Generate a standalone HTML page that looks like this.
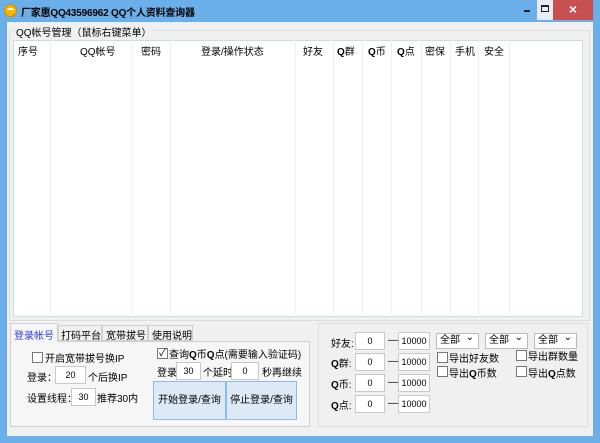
<!DOCTYPE html>
<html><head><meta charset="utf-8"><style>
*{box-sizing:border-box;margin:0;padding:0}
body{width:600px;height:443px;overflow:hidden;background:#6aaeea;font-family:"Liberation Sans","Noto Sans CJK SC",sans-serif;font-size:10px;color:#000;position:relative}
.a{position:absolute;white-space:nowrap}
.inp{position:absolute;background:#fff;border:1px solid #c8c8c8;text-align:center;font-size:9px;line-height:16px}
.cb{position:absolute;width:11px;height:11px;border:1px solid #777;background:#fff}
.sel{position:absolute;background:#fff;border:1px solid #bbb;height:16px;font-size:10px;line-height:14px;padding-left:3px}
.sel:after{content:"⌄";position:absolute;right:4px;top:-3px;font-size:10px}
.hd{position:absolute;top:43px;font-size:10px}
.vl{position:absolute;top:40px;width:1px;height:277px;background:#f0f0f0}
</style></head><body>
<div class="a" style="left:0;top:0;width:600px;height:22px;background:#6aaeea"></div>
<div class="a" style="left:4px;top:4px;width:13px;height:13px;border-radius:50%;background:#f4b400;border:1px solid #d08a00"></div>
<div class="a" style="left:7px;top:8px;width:7px;height:4px;border-top:2px solid #fff;border-radius:50%"></div>
<div class="a" style="left:21px;top:4px;font-weight:bold;font-size:10px;letter-spacing:-0.2px;color:#000">厂家惠QQ43596962 QQ个人资料查询器</div>
<div class="a" style="left:524px;top:10px;width:6px;height:2px;background:#222"></div>
<div class="a" style="left:537px;top:0;width:16px;height:20px;background:#e8edf3"></div>
<div class="a" style="left:541px;top:5px;width:8px;height:7px;border:1px solid #222;border-top-width:2px"></div>
<div class="a" style="left:553px;top:0;width:40px;height:20px;background:#c75050;color:#fff;text-align:center;font-size:14px;line-height:19px;font-weight:bold">×</div>
<div class="a" style="left:7px;top:22px;width:586px;height:414px;background:#f0f0f0"></div>
<div class="a" style="left:9px;top:30px;width:581px;height:291px;border:1px solid #dcdcdc"></div>
<div class="a" style="left:14px;top:24px;background:#f0f0f0;padding:0 2px;font-size:10px">QQ帐号管理（鼠标右键菜单）</div>
<div class="a" style="left:13px;top:40px;width:570px;height:277px;background:#fff;border:1px solid #cdd"></div>
<div class="vl" style="left:50px"></div><div class="vl" style="left:132px"></div><div class="vl" style="left:170px"></div><div class="vl" style="left:295px"></div><div class="vl" style="left:333px"></div><div class="vl" style="left:362px"></div><div class="vl" style="left:391px"></div><div class="vl" style="left:421px"></div><div class="vl" style="left:450px"></div><div class="vl" style="left:478px"></div><div class="vl" style="left:509px"></div>
<div class="hd" style="left:18px">序号</div><div class="hd" style="left:80px">QQ帐号</div><div class="hd" style="left:141px">密码</div><div class="hd" style="left:201px">登录/操作状态</div><div class="hd" style="left:303px">好友</div><div class="hd" style="left:337px"><b>Q</b>群</div><div class="hd" style="left:368px"><b>Q</b>币</div><div class="hd" style="left:397px"><b>Q</b>点</div><div class="hd" style="left:425px">密保</div><div class="hd" style="left:455px">手机</div><div class="hd" style="left:484px">安全</div>
<div class="a" style="left:10px;top:341px;width:300px;height:86px;border:1px solid #d0d0d0;background:#f6f6f6"></div>
<div class="a" style="left:10px;top:323px;width:48px;height:19px;border:1px solid #d0d0d0;border-bottom:none;background:#f6f6f6;color:#2b3de0;padding:3px 0 0 3px">登录帐号</div>
<div class="a" style="left:58px;top:325px;width:44px;height:16px;border:1px solid #d0d0d0;background:#f0f0f0;padding:1px 0 0 2px">打码平台</div>
<div class="a" style="left:102px;top:325px;width:46px;height:16px;border:1px solid #d0d0d0;background:#f0f0f0;padding:1px 0 0 3px">宽带拔号</div>
<div class="a" style="left:148px;top:325px;width:45px;height:16px;border:1px solid #d0d0d0;background:#f0f0f0;padding:1px 0 0 3px">使用说明</div>
<div class="cb" style="left:32px;top:352px"></div><div class="a" style="left:45px;top:350px">开启宽带拔号换IP</div>
<div class="a" style="left:27px;top:369px">登录：</div><div class="inp" style="left:55px;top:366px;width:31px;height:18px">20</div><div class="a" style="left:88px;top:369px">个后换IP</div>
<div class="a" style="left:27px;top:390px">设置线程：</div><div class="inp" style="left:71px;top:388px;width:25px;height:18px">30</div><div class="a" style="left:97px;top:390px">推荐30内</div>
<div class="cb" style="left:157px;top:348px;font-size:10px;line-height:9px;text-align:center">✓</div><div class="a" style="left:169px;top:346px">查询<b>Q</b>币<b>Q</b>点(需要输入验证码)</div>
<div class="a" style="left:157px;top:364px">登录</div><div class="inp" style="left:176px;top:362px;width:25px;height:18px">30</div><div class="a" style="left:203px;top:364px">个延时</div><div class="inp" style="left:231px;top:362px;width:28px;height:18px">0</div><div class="a" style="left:262px;top:364px">秒再继续</div>
<div class="a" style="left:153px;top:381px;width:73px;height:39px;background:#dde9f6;border:1px solid #8cbbe8;text-align:center;line-height:37px">开始登录/查询</div>
<div class="a" style="left:226px;top:381px;width:71px;height:39px;background:#dde9f6;border:1px solid #8cbbe8;text-align:center;line-height:37px">停止登录/查询</div>
<div class="a" style="left:318px;top:323px;width:270px;height:104px;border:1px solid #dcdcdc"></div>
<div class="a" style="left:331px;top:335px">好友:</div><div class="a" style="left:331px;top:355px"><b>Q</b>群:</div><div class="a" style="left:331px;top:376px"><b>Q</b>币:</div><div class="a" style="left:331px;top:397px"><b>Q</b>点:</div>
<div class="inp" style="left:355px;top:332px;width:30px;height:18px">0</div><div class="inp" style="left:355px;top:353px;width:30px;height:18px">0</div><div class="inp" style="left:355px;top:374px;width:30px;height:18px">0</div><div class="inp" style="left:355px;top:395px;width:30px;height:18px">0</div>
<div class="a" style="left:388px;top:335px">—</div><div class="a" style="left:388px;top:356px">—</div><div class="a" style="left:388px;top:377px">—</div><div class="a" style="left:388px;top:398px">—</div>
<div class="inp" style="left:398px;top:332px;width:32px;height:18px">10000</div><div class="inp" style="left:398px;top:353px;width:32px;height:18px">10000</div><div class="inp" style="left:398px;top:374px;width:32px;height:18px">10000</div><div class="inp" style="left:398px;top:395px;width:32px;height:18px">10000</div>
<div class="sel" style="left:436px;top:333px;width:43px">全部</div><div class="sel" style="left:485px;top:333px;width:43px">全部</div><div class="sel" style="left:534px;top:333px;width:43px">全部</div>
<div class="cb" style="left:437px;top:352px"></div><div class="a" style="left:449px;top:350px">导出好友数</div>
<div class="cb" style="left:516px;top:350px"></div><div class="a" style="left:528px;top:348px">导出群数量</div>
<div class="cb" style="left:437px;top:366px"></div><div class="a" style="left:449px;top:365px">导出<b>Q</b>币数</div>
<div class="cb" style="left:516px;top:366px"></div><div class="a" style="left:528px;top:365px">导出<b>Q</b>点数</div>
</body></html>
